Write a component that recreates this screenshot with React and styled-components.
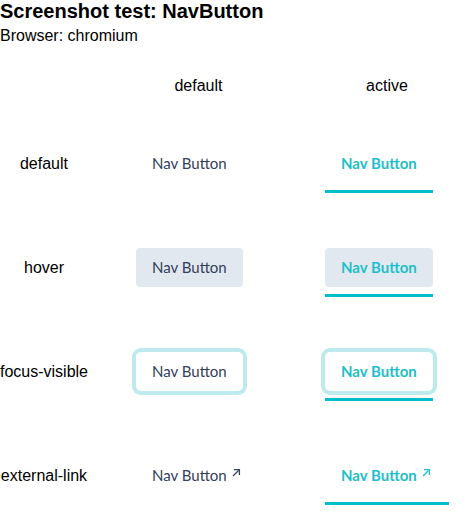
import React from "react";
import styled, { createGlobalStyle, css } from "styled-components";

const Global = createGlobalStyle`
  html, body { margin: 0; padding: 0; background: #fff; overflow: hidden; }
  body { font-family: "Liberation Sans", Arial, sans-serif; color: #000; }
`;

const Title = styled.h1`
  margin: 0;
  font-size: 20px;
  line-height: 23px;
  font-weight: 700;
`;

const Subtitle = styled.div`
  font-size: 16px;
  line-height: 18px;
  margin-top: 4px;
`;

const Grid = styled.div`
  display: grid;
  grid-template-columns: 104px 189px 188px;
  grid-template-rows: 18px repeat(4, 104px);
  margin-top: 32px;
  width: 481px;
`;

const ColHead = styled.div`
  font-size: 16px;
  line-height: 18px;
  text-align: center;
`;

const RowHead = styled.div`
  width: 88px;
  height: 39px;
  padding-top: 49px;
  display: flex;
  align-items: center;
  justify-content: center;
  font-size: 16px;
  white-space: nowrap;
`;

const Cell = styled.div`
  padding: 49px 0 0 32px;
  display: flex;
  align-items: flex-start;
`;

const Item = styled.div`
  display: inline-flex;
  flex-direction: column;
  gap: 7px;
`;

const Button = styled.a`
  display: inline-flex;
  align-items: flex-start;
  gap: 4px;
  height: 39px;
  box-sizing: border-box;
  padding: 10px 16px;
  border-radius: 4px;
  font-family: Lato, "Noto Sans", sans-serif;
  font-size: 15px;
  line-height: 19px;
  text-decoration: none;
  white-space: nowrap;
  color: ${(p) => (p.$active ? "#1cc0cc" : "#33405a")};
  font-weight: ${(p) => (p.$active ? 700 : 400)};
  background: ${(p) => (p.$state === "hover" ? "#e2e8f0" : "transparent")};
  ${(p) =>
    p.$state === "focus" &&
    css`
      box-shadow: 0 0 0 4px #bdeaed;
      border-radius: 5px;
    `}
`;

const Underline = styled.div`
  height: 3px;
  background: #00bfcb;
  visibility: ${(p) => (p.$show ? "visible" : "hidden")};
`;

const Ext = styled.svg`
  width: 12px;
  height: 12px;
  margin-top: 1px;
  flex: none;
`;

function ExternalIcon() {
  return (
    <Ext viewBox="0 0 12 12" fill="none" stroke="currentColor" strokeWidth="1.3">
      <path d="M2 9 L7.5 3.5" />
      <path d="M3.6 2.6 H8.4 V7.4" strokeLinecap="square" />
    </Ext>
  );
}

function Nav({ active, state, external }) {
  return (
    <Item>
      <Button $active={active} $state={state}>
        <span>Nav Button</span>
        {external && <ExternalIcon />}
      </Button>
      <Underline $show={active} />
    </Item>
  );
}

const rows = [
  { label: "default", state: "default" },
  { label: "hover", state: "hover" },
  { label: "focus-visible", state: "focus" },
  { label: "external-link", state: "default", external: true },
];

export default function App() {
  return (
    <>
      <Global />
      <Title>Screenshot test: NavButton</Title>
      <Subtitle>Browser: chromium</Subtitle>
      <Grid>
        <div />
        <ColHead>default</ColHead>
        <ColHead>active</ColHead>
        {rows.map((r) => (
          <React.Fragment key={r.label}>
            <RowHead>{r.label}</RowHead>
            <Cell>
              <Nav state={r.state} external={r.external} />
            </Cell>
            <Cell>
              <Nav active state={r.state} external={r.external} />
            </Cell>
          </React.Fragment>
        ))}
      </Grid>
    </>
  );
}
